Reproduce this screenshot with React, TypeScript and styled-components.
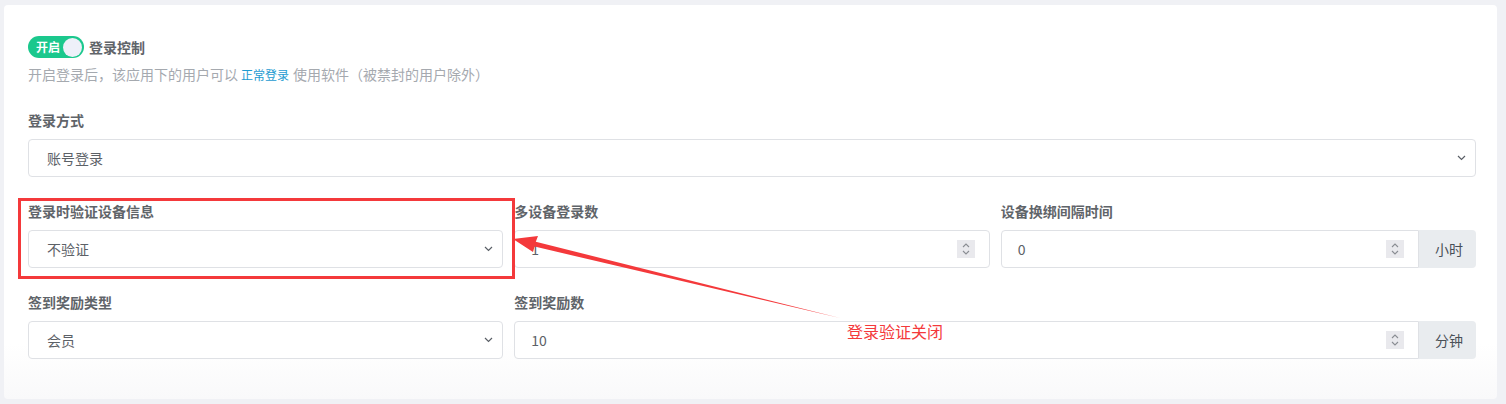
import React from "react";
import styled, { createGlobalStyle } from "styled-components";

const Global = createGlobalStyle`
  html, body { margin: 0; padding: 0; background: #f0f1f5; }
  body { font-family: "Noto Sans CJK SC", "Noto Sans", sans-serif; }
  * { box-sizing: border-box; }
`;

const Page = styled.div`
  position: relative;
  width: 1506px;
  height: 404px;
  padding: 5px 9px 0 4px;
`;

const Card = styled.div`
  background: linear-gradient(to bottom, #ffffff 0%, #ffffff 86%, #f9f9fa 100%);
  border-radius: 4px;
  padding: 31px 21px 40px 24px;
`;

const ToggleRow = styled.div`
  display: flex;
  align-items: center;
  gap: 5px;
  height: 22px;
`;

const Switch = styled.div`
  display: flex;
  align-items: center;
  justify-content: space-between;
  width: 56px;
  height: 22px;
  border-radius: 11px;
  background: #1bc88d;
  padding: 0 2px 0 8px;
`;

const SwitchText = styled.span`
  color: #fff;
  font-size: 12px;
  font-weight: 700;
  line-height: 22px;
`;

const Knob = styled.span`
  width: 19px;
  height: 19px;
  border-radius: 50%;
  background: #eef0f9;
`;

const ToggleLabel = styled.span`
  font-size: 14px;
  font-weight: 700;
  color: #5f6469;
  line-height: 22px;
`;

const Desc = styled.div`
  margin-top: 6px;
  font-size: 14px;
  line-height: 20px;
  color: #a5a9af;
`;

const Link = styled.span`
  color: #1e9bd1;
  font-size: 12px;
  margin: 0 4px 0 3px;
`;

const Form = styled.div`
  margin-top: 25px;
  display: grid;
  grid-template-columns: repeat(3, 1fr);
  column-gap: 11px;
  row-gap: 24px;
`;

const Field = styled.div<{ $span?: number }>`
  grid-column: span ${(p) => p.$span ?? 1};
  min-width: 0;
`;

const Label = styled.div`
  font-size: 14px;
  font-weight: 700;
  color: #5f6469;
  line-height: 20px;
  margin-bottom: 9px;
`;

const Box = styled.div<{ $grouped?: boolean }>`
  flex: 1;
  height: 38px;
  display: flex;
  align-items: center;
  justify-content: space-between;
  border: 1px solid #dfe1e5;
  border-radius: ${(p) => (p.$grouped ? "4px 0 0 4px" : "4px")};
  background: #fff;
  font-size: 14px;
  color: #5c6167;
`;

const SelectBox = styled(Box)`
  padding: 0 9px 0 18px;
`;

const NumberBox = styled(Box)`
  padding: 0 14px 0 16px;
`;

const Group = styled.div`
  display: flex;
`;

const Addon = styled.div`
  width: 57px;
  height: 38px;
  display: flex;
  align-items: center;
  justify-content: center;
  padding-left: 3px;
  background: #e9ecef;
  border-radius: 0 4px 4px 0;
  font-size: 14px;
  color: #495057;
`;

const Spinner = styled.span`
  width: 18px;
  height: 18px;
  background: #e9e9ed;
  display: flex;
  align-items: center;
  justify-content: center;
`;

const RedBox = styled.div`
  position: absolute;
  left: 18px;
  top: 198px;
  width: 497px;
  height: 81px;
  border: 3px solid #f4393b;
  pointer-events: none;
`;

const Overlay = styled.svg`
  position: absolute;
  left: 0;
  top: 0;
  pointer-events: none;
`;

const Note = styled.div`
  position: absolute;
  left: 847px;
  top: 320px;
  font-size: 16px;
  line-height: 22px;
  color: #f4393b;
  font-family: "Noto Sans CJK SC", sans-serif;
`;

const Chevron = () => (
  <svg width="9" height="6" viewBox="0 0 9 6">
    <path d="M1 1 L4.5 4.5 L8 1" fill="none" stroke="#5a5f66" strokeWidth="1.2" />
  </svg>
);

const Spin = () => (
  <Spinner>
    <svg width="10" height="14" viewBox="0 0 10 14">
      <path d="M2 5 L5 2 L8 5" fill="none" stroke="#8a8d93" strokeWidth="1.1" />
      <path d="M2 9 L5 12 L8 9" fill="none" stroke="#8a8d93" strokeWidth="1.1" />
    </svg>
  </Spinner>
);

const Select = ({ value }: { value: string }) => (
  <SelectBox>
    <span>{value}</span>
    <Chevron />
  </SelectBox>
);

const NumberInput = ({ value, unit }: { value: string; unit?: string }) =>
  unit ? (
    <Group>
      <NumberBox $grouped>
        <span>{value}</span>
        <Spin />
      </NumberBox>
      <Addon>{unit}</Addon>
    </Group>
  ) : (
    <NumberBox>
      <span>{value}</span>
      <Spin />
    </NumberBox>
  );

export default function App() {
  return (
    <>
      <Global />
      <Page>
        <Card>
          <ToggleRow>
            <Switch>
              <SwitchText>开启</SwitchText>
              <Knob />
            </Switch>
            <ToggleLabel>登录控制</ToggleLabel>
          </ToggleRow>
          <Desc>
            开启登录后，该应用下的用户可以<Link>正常登录</Link>使用软件（被禁封的用户除外）
          </Desc>
          <Form>
            <Field $span={3}>
              <Label>登录方式</Label>
              <Select value="账号登录" />
            </Field>
            <Field>
              <Label>登录时验证设备信息</Label>
              <Select value="不验证" />
            </Field>
            <Field>
              <Label>多设备登录数</Label>
              <NumberInput value="1" />
            </Field>
            <Field>
              <Label>设备换绑间隔时间</Label>
              <NumberInput value="0" unit="小时" />
            </Field>
            <Field>
              <Label>签到奖励类型</Label>
              <Select value="会员" />
            </Field>
            <Field $span={2}>
              <Label>签到奖励数</Label>
              <NumberInput value="10" unit="分钟" />
            </Field>
          </Form>
        </Card>
        <RedBox />
        <Overlay width="1506" height="404" viewBox="0 0 1506 404">
          <polygon
            points="513,239 538,236 535.8,241.8 840,318 534.6,246.6 533,252"
            fill="#f4393b"
          />
        </Overlay>
        <Note>登录验证关闭</Note>
      </Page>
    </>
  );
}
